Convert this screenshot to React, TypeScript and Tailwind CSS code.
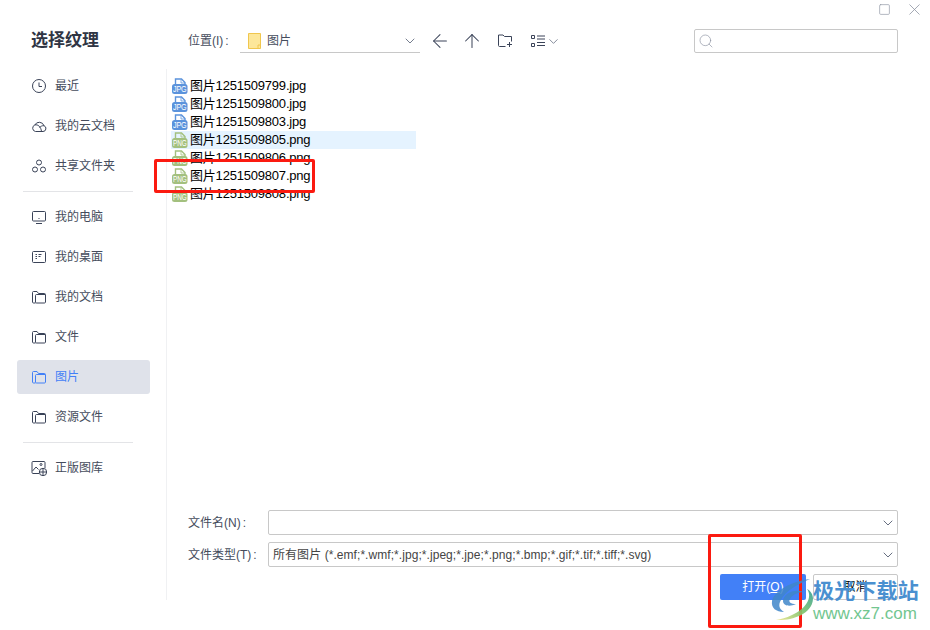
import { ArrowLeft, ArrowUp, ChevronDown, Search, Square, X } from "lucide-react"
import type { ReactNode } from "react"

const FONT = "font-['Liberation_Sans','Noto_Sans_CJK_SC',sans-serif]"

/* sidebar icons, all 16x16 with a thin stroke */
function Glyph({ children }: { children: ReactNode }) {
  return (
    <svg width="16" height="16" viewBox="0 0 16 16" fill="none" stroke="currentColor" strokeWidth="1">
      {children}
    </svg>
  )
}

const ClockIcon = () => (
  <Glyph>
    <circle cx="8" cy="8" r="6.5" />
    <path d="M8 4.5V8.5H11" />
  </Glyph>
)
const CloudIcon = () => (
  <Glyph>
    <path d="M4.5 13.5H12A3 3 0 0 0 13 7.7A5 5 0 0 0 3.8 7A3.4 3.4 0 0 0 4.5 13.5Z" />
    <path d="M3.8 7C7 6 10 9 10.5 13.5M13 7.7C11 7.5 9.5 8.5 8.5 9.5" />
  </Glyph>
)
const ShareIcon = () => (
  <Glyph>
    <circle cx="8" cy="4.5" r="2.5" />
    <circle cx="4" cy="11.5" r="2.5" />
    <circle cx="12" cy="11.5" r="2.5" />
  </Glyph>
)
const MonitorIcon = () => (
  <Glyph>
    <rect x="1.5" y="2.5" width="13" height="9.5" rx="1" />
    <path d="M5 14.5H11M7.5 9.5H8.5" />
  </Glyph>
)
const DesktopIcon = () => (
  <Glyph>
    <rect x="1.5" y="2.5" width="13" height="11" rx="1" />
    <path d="M4.5 5.5H6M7.5 5.5H10.5M4.5 7.5H6M7.5 7.5H9.5M4.5 9.5H6" />
  </Glyph>
)
const FolderIcon = () => (
  <Glyph>
    <path d="M4.5 14H2.5C1.9 14 1.5 13.6 1.5 13V3.5C1.5 2.9 1.9 2.5 2.5 2.5H6L7.5 4.5H13.5C14.1 4.5 14.5 4.9 14.5 5.5V13C14.5 13.6 14.1 14 13.5 14H5.5C4.9 14 4.5 13.6 4.5 13V6.5C4.5 5.9 4.9 5.5 5.5 5.5H14" />
  </Glyph>
)
const GalleryIcon = () => (
  <Glyph>
    <path d="M8 13.5H2C1.4 13.5 1 13.1 1 12.5V2.5C1 1.9 1.4 1.5 2 1.5H13C13.6 1.5 14 1.9 14 2.5V8" />
    <path d="M1.5 11L5 7L7.5 9.5" />
    <circle cx="10" cy="4.5" r="1" />
    <circle cx="12" cy="12" r="3.7" />
    <path d="M8.3 12H15.7M12 8.3V15.7" />
  </Glyph>
)

function FileIcon({ kind }: { kind: "JPG" | "PNG" }) {
  const fill = kind === "JPG" ? "#5b93dc" : "#a3c07e"
  return (
    <svg width="17" height="17" viewBox="0 0 17 17" className="shrink-0 overflow-visible">
      <path d="M4.5 1H10.5L14 4.5V7H4.5Z" fill="none" stroke={fill} strokeWidth="1.4" />
      <path d="M10 1.5V5H14" fill="none" stroke={fill} strokeWidth="0.8" />
      <rect x="1" y="6" width="15.5" height="10" rx="2.5" fill={fill} />
      <text
        x="8.75"
        y="14.4"
        textAnchor="middle"
        fontSize="9.5"
        textLength="13.5"
        lengthAdjust="spacingAndGlyphs"
        fill="#fff"
        fontFamily="Liberation Sans"
      >
        {kind}
      </text>
    </svg>
  )
}

const places = [
  { label: "最近", icon: <ClockIcon /> },
  { label: "我的云文档", icon: <CloudIcon /> },
  { label: "共享文件夹", icon: <ShareIcon />, divider: true },
  { label: "我的电脑", icon: <MonitorIcon /> },
  { label: "我的桌面", icon: <DesktopIcon /> },
  { label: "我的文档", icon: <FolderIcon /> },
  { label: "文件", icon: <FolderIcon /> },
  { label: "图片", icon: <FolderIcon />, active: true },
  { label: "资源文件", icon: <FolderIcon />, divider: true },
  { label: "正版图库", icon: <GalleryIcon /> },
]

const files: { name: string; kind: "JPG" | "PNG"; hover?: boolean }[] = [
  { name: "图片1251509799.jpg", kind: "JPG" },
  { name: "图片1251509800.jpg", kind: "JPG" },
  { name: "图片1251509803.jpg", kind: "JPG" },
  { name: "图片1251509805.png", kind: "PNG", hover: true },
  { name: "图片1251509806.png", kind: "PNG" },
  { name: "图片1251509807.png", kind: "PNG" },
  { name: "图片1251509808.png", kind: "PNG" },
]

function Sidebar() {
  return (
    <aside className="flex w-[167px] shrink-0 flex-col">
      <h1 className="h-[69px] pt-[29px] pl-[31px] text-[17px] leading-[24px] font-bold text-[#2f3544]">选择纹理</h1>
      <nav className="mb-[30px] flex-1 border-r border-[#f0f1f3]">
        {places.map((p) => (
          <div key={p.label} className="flex flex-col">
            <div
              className={
                "mb-[6px] ml-[17px] flex h-[34px] w-[133px] items-center gap-[8px] rounded-[3px] pl-[14px] text-[12px] " +
                (p.active ? "bg-[#dfe2ea] text-[#4280f7]" : "text-[#454c5c]")
              }
            >
              <span className={p.active ? "text-[#4280f7]" : "text-[#3a4358]"}>{p.icon}</span>
              {p.label}
            </div>
            {p.divider && <div className="mt-[2px] mb-[8px] ml-[23px] h-px w-[110px] bg-[#e3e4e7]" />}
          </div>
        ))}
      </nav>
    </aside>
  )
}

function Colon() {
  return <span className="ml-[2px]">:</span>
}

function Toolbar() {
  return (
    <div className="flex h-[24px] items-center pr-[32px] pl-[21px] text-[#3a4358]">
      <span className="w-[52px] text-[12px] text-[#454c5c]">
        位置(I)
        <Colon />
      </span>
      <div className="flex h-[24px] w-[180px] items-center border-b border-[#c8c8c8] pr-[2px] pl-[8px]">
        <svg width="13" height="16" viewBox="0 0 13 16" className="shrink-0">
          <path d="M.5 .5H12.5V15.5H.5Z" fill="#fde79a" stroke="#f0c64e" />
          <path d="M10 15.5V12H12.5" fill="none" stroke="#f0c64e" />
        </svg>
        <span className="ml-[6px] flex-1 text-[12px] text-[#454c5c]">图片</span>
        <ChevronDown size={16} strokeWidth={1.4} className="text-[#6b7385]" />
      </div>
      <ArrowLeft size={22} strokeWidth={1.1} className="ml-[9px]" />
      <ArrowUp size={22} strokeWidth={1.1} className="ml-[10px]" />
      <svg width="16" height="16" viewBox="0 0 16 16" fill="none" stroke="currentColor" className="ml-[14px]">
        <path d="M8.5 13.5H2.5C1.9 13.5 1.5 13.1 1.5 12.5V2H6L7.5 3.5H14.5V8.5M10 11.5H15M12.5 9V14" />
      </svg>
      <svg width="16" height="16" viewBox="0 0 16 16" fill="none" stroke="currentColor" className="ml-[17px]">
        <path d="M1.5 2.5H4.5V5.5H1.5ZM1.5 10.5H4.5V13.5H1.5ZM7 3H15M7 6H15M7 9.5H15M7 12.5H15" />
      </svg>
      <ChevronDown size={15} strokeWidth={1.3} className="text-[#6b7385]" />
      <div className="ml-auto flex h-[24px] w-[204px] items-center rounded-[2px] border border-[#c8c8c8] pl-[3px]">
        <Search size={16} strokeWidth={1} className="text-[#8d93a1]" />
      </div>
    </div>
  )
}

function FileList() {
  return (
    <div className="mt-[24px] flex-1 pl-[4px]">
      {files.map((f) => (
        <div
          key={f.name}
          className={
            "flex h-[18px] w-[245px] items-center gap-[2px] text-[13px] tracking-[-0.2px] text-black " +
            (f.hover ? "bg-[#e5f3ff]" : "")
          }
        >
          <FileIcon kind={f.kind} />
          {f.name}
        </div>
      ))}
    </div>
  )
}

function Field({ label, value }: { label: string; value?: string }) {
  return (
    <div className="mb-[7px] flex items-center">
      <span className="w-[80px] text-[12px] text-[#454c5c]">
        {label}
        <Colon />
      </span>
      <div className="flex h-[25px] flex-1 items-center justify-between rounded-[2px] border border-[#c8c8c8] pr-[1px] pl-[4px] text-[12px] tracking-[0.06px] text-[#444]">
        <span>{value}</span>
        <ChevronDown size={16} strokeWidth={1.4} className="text-[#5b6477]" />
      </div>
    </div>
  )
}

export default function App() {
  return (
    <div className={"relative flex h-[630px] w-[930px] overflow-hidden bg-white " + FONT}>
      <Sidebar />
      <main className="flex flex-1 flex-col">
        <div className="flex h-[29px] items-start justify-end gap-[14px] pr-[6px] text-[#8d93a1]">
          <Square size={13} strokeWidth={1.2} className="mt-[3px]" />
          <X size={19} strokeWidth={1} />
        </div>
        <Toolbar />
        <FileList />
        <div className="pr-[32px] pl-[21px]">
          <Field label="文件名(N)" />
          <Field label="文件类型(T)" value="所有图片 (*.emf;*.wmf;*.jpg;*.jpeg;*.jpe;*.png;*.bmp;*.gif;*.tif;*.tiff;*.svg)" />
          <div className="mb-[30px] flex justify-end gap-[7px] text-[12px]">
            <button className="h-[26px] w-[86px] rounded-[2px] bg-[#4280f7] text-white">
              打开(<span className="underline">O</span>)
            </button>
            <button className="h-[26px] w-[85px] rounded-[2px] border border-[#c8c8c8] text-black">取消</button>
          </div>
        </div>
      </main>

      {/* red annotation frames */}
      <div className="absolute top-[159px] left-[154px] h-[34px] w-[161px] rounded-[2px] border-[3px] border-[#fb1a10]" />
      <div className="absolute top-[534px] left-[708px] h-[94px] w-[94px] rounded-[2px] border-[3px] border-[#fb1a10]" />

      {/* watermark */}
      <div className="absolute top-[577px] left-[770px]">
        <svg width="44" height="44" viewBox="0 0 44 44" fill="none">
          <defs>
            <linearGradient id="swoosh" x1="1" y1="0" x2="0" y2="1">
              <stop offset="0" stopColor="#2f9e9a" />
              <stop offset="0.5" stopColor="#7cc36a" />
              <stop offset="1" stopColor="#f0e68c" />
            </linearGradient>
          </defs>
          <path d="M40 2C22 4 4 14 2 24C1 31 6 35 14 35C9 32 8 28 11 23C15 14 28 7 40 2Z" fill="#3f86c9" fillOpacity="0.85" />
          <path d="M34 15C24 11 13 17 13 24C13 29 20 30 26 27C21 27 18 25 20 22C22 18 28 15 34 15Z" fill="#3f86c9" fillOpacity="0.85" />
          <path d="M37 12C43 20 36 32 22 38C16 41 11 42 6 43C20 44 42 38 43 22C43 18 41 14 37 12Z" fill="url(#swoosh)" fillOpacity="0.9" />
        </svg>
      </div>
      <div className="absolute top-[579px] left-[813px] text-[21px] leading-[24px] font-bold tracking-[0.2px] whitespace-nowrap text-[#4a90d0]">
        极光下载站
      </div>
      <div className="absolute top-[604px] left-[813px] text-[17px] leading-[20px] whitespace-nowrap text-[#72c690]">
        www.xz7.com
      </div>
    </div>
  )
}
